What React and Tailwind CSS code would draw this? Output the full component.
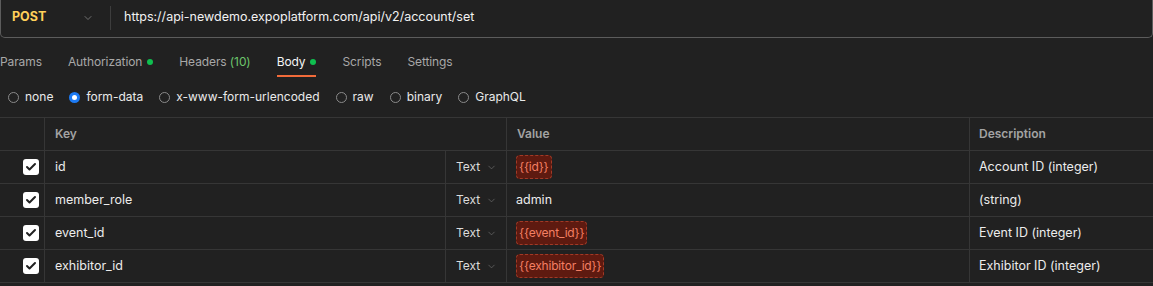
import { ChevronDown, Check } from 'lucide-react';

const tabs = [
  { label: 'Params' },
  { label: 'Authorization', dot: true },
  { label: 'Headers', count: '(10)' },
  { label: 'Body', dot: true, active: true },
  { label: 'Scripts' },
  { label: 'Settings' },
];

const bodyTypes = [
  { label: 'none' },
  { label: 'form-data', checked: true },
  { label: 'x-www-form-urlencoded' },
  { label: 'raw' },
  { label: 'binary' },
  { label: 'GraphQL' },
];

const rows = [
  { key: 'id', value: '{{id}}', variable: true, description: 'Account ID (integer)' },
  { key: 'member_role', value: 'admin', description: '(string)' },
  { key: 'event_id', value: '{{event_id}}', variable: true, description: 'Event ID (integer)' },
  { key: 'exhibitor_id', value: '{{exhibitor_id}}', variable: true, description: 'Exhibitor ID (integer)' },
];

const App = () => {
  return (
    <div className="h-[286px] w-[1153px] overflow-hidden bg-[#212121] font-['Inter',sans-serif] text-[12px] text-[#e8e8e8]">
      {/* URL bar */}
      <div className="-mt-[2px] flex h-[40px] items-center rounded-b-[5px] border border-t-0 border-[#5c5c5c]">
        <div className="flex h-[24px] w-[110px] items-center justify-between border-r border-[#3d3d3d] pl-[11px] pr-[16px]">
          <span className="text-[12.5px] font-bold text-[#ffd05a]">POST</span>
          <ChevronDown className="h-[12px] w-[12px] text-[#8a8a8a]" strokeWidth={1.5} />
        </div>
        <span className="pl-[13px] text-[12.5px] text-[#f2f2f2]">
          https://api-newdemo.expoplatform.com/api/v2/account/set
        </span>
      </div>

      {/* Tabs */}
      <div className="mt-[15px] flex h-[24px] gap-[26px] text-[12px] tracking-[-0.1px]">
        {tabs.map((t) => (
          <div
            key={t.label}
            className={`flex items-start gap-[5px] ${t.active ? 'border-b-2 border-[#f26b3a] text-[#f5f5f5]' : 'text-[#a8a8a8]'}`}
          >
            <span>
              {t.label}
              {t.count && <span className="text-[#6cc56c]"> {t.count}</span>}
            </span>
            {t.dot && <span className="mt-[6px] h-[6px] w-[6px] rounded-full bg-[#0fbf4f]" />}
          </div>
        ))}
      </div>

      {/* Body types */}
      <div className="mt-[10px] flex h-[20px] items-center gap-[16px] pl-[8px] text-[12px]">
        {bodyTypes.map((b) => (
          <div key={b.label} className="flex items-center gap-[6px]">
            {b.checked ? (
              <span className="flex h-[11px] w-[11px] items-center justify-center rounded-full bg-[#1d7af2]">
                <span className="h-[5px] w-[5px] rounded-full bg-white" />
              </span>
            ) : (
              <span className="h-[11px] w-[11px] rounded-full border border-[#8a8a8a]" />
            )}
            <span className="text-[#eaeaea]">{b.label}</span>
          </div>
        ))}
      </div>

      {/* Table */}
      <div className="mt-[10px] border-t border-[#363636]">
        <div className="flex h-[33px] border-b border-[#363636] text-[12px] font-semibold text-[#a3a3a3]">
          <div className="w-[45px] border-r border-[#363636]" />
          <div className="flex w-[462px] items-center border-r border-[#363636] pl-[10px]">Key</div>
          <div className="flex w-[463px] items-center border-r border-[#363636] pl-[10px]">Value</div>
          <div className="flex flex-1 items-center pl-[9px]">Description</div>
        </div>
        {rows.map((r) => (
          <div key={r.key} className="flex h-[33px] border-b border-[#363636] text-[12.5px]">
            <div className="flex w-[45px] items-center justify-end border-r border-[#363636] pr-[5px]">
              <span className="flex h-[16px] w-[16px] items-center justify-center rounded-[3px] bg-white">
                <Check className="h-[12px] w-[12px] text-[#212121]" strokeWidth={4} />
              </span>
            </div>
            <div className="flex w-[401px] items-center border-r border-[#363636] pl-[10px] text-[#ececec]">
              {r.key}
            </div>
            <div className="flex w-[61px] items-center border-r border-[#363636] pl-[10px] text-[12px] text-[#dcdcdc]">
              Text
              <ChevronDown className="ml-[6px] h-[11px] w-[11px] text-[#6f6f6f]" strokeWidth={1.5} />
            </div>
            <div className="flex w-[463px] items-center border-r border-[#363636] pl-[9px]">
              {r.variable ? (
                <span className="rounded-[4px] border border-dashed border-[#a23a26] bg-[#5e1a10] px-[2px] py-[2px] text-[12px] tracking-[-0.2px] text-[#f47f63]">
                  {r.value}
                </span>
              ) : (
                <span className="text-[#ececec]">{r.value}</span>
              )}
            </div>
            <div className="flex flex-1 items-center pl-[9px] text-[#ececec]">{r.description}</div>
          </div>
        ))}
      </div>
    </div>
  );
};

export default App;
